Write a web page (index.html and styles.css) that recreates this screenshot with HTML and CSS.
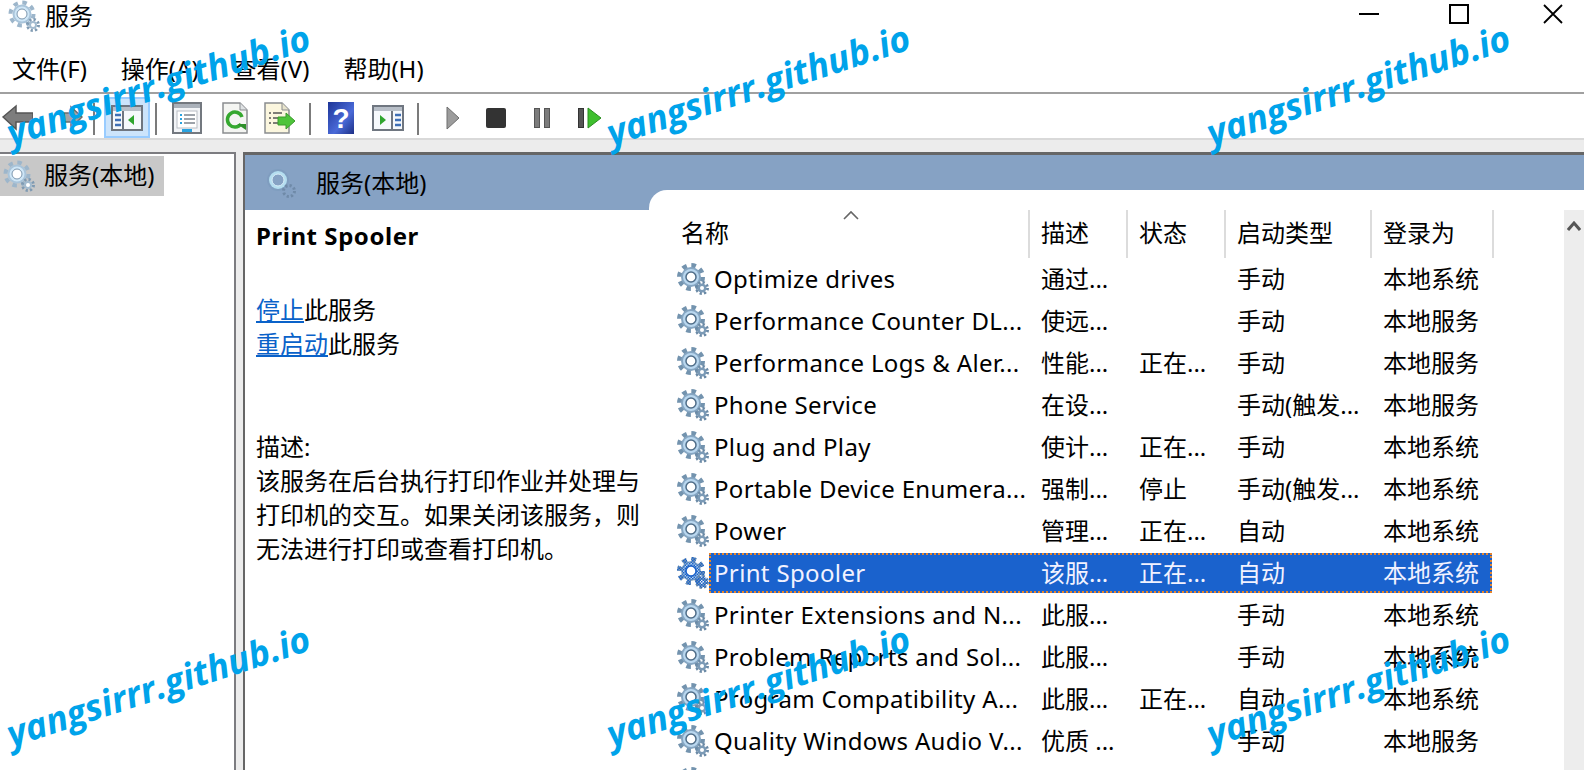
FILE: index.html
```html
<!DOCTYPE html>
<html>
<head>
  <title>服务</title>
  <link rel="stylesheet" href="styles.css">
</head>
<body>
  <svg class="sprite" width="0" height="0">
    <defs>
      <pattern id="dither" width="3" height="3" patternUnits="userSpaceOnUse">
        <rect width="1.5" height="1.5" fill="#1a62cd"/>
        <rect x="1.5" y="1.5" width="1.5" height="1.5" fill="#1a62cd"/>
      </pattern>
      <symbol id="gear" viewBox="0 0 32 32">
        <circle cx="14" cy="14" r="11.5" fill="none" stroke="#7393ae" stroke-width="5" stroke-dasharray="4.5 4.53"/>
        <circle cx="14" cy="14" r="10" fill="#86a6c2"/>
        <circle cx="14" cy="14" r="8" fill="#b9d7ef"/>
        <circle cx="14" cy="14" r="5" fill="#fff" stroke="#4f6d88" stroke-width="1.5"/>
        <circle cx="25" cy="25" r="5.5" fill="none" stroke="#6b8aa6" stroke-width="3" stroke-dasharray="2.2 2.1"/>
        <circle cx="25" cy="25" r="4.5" fill="#7b9ab6"/>
        <circle cx="25" cy="25" r="2" fill="#fff"/>
      </symbol>
      <symbol id="gear-light" viewBox="0 0 32 32">
        <circle cx="14" cy="14" r="11.5" fill="none" stroke="#9db6cb" stroke-width="4" stroke-dasharray="4.5 4.53"/>
        <circle cx="14" cy="14" r="9.5" fill="#a9c4da"/>
        <circle cx="14" cy="14" r="7.5" fill="#cfe6f6"/>
        <circle cx="14" cy="14" r="5" fill="#fff" stroke="#7d97ae" stroke-width="1"/>
        <circle cx="25" cy="25" r="5.5" fill="none" stroke="#7f9ab2" stroke-width="3" stroke-dasharray="2.2 2.1"/>
        <circle cx="25" cy="25" r="4" fill="#a3bbcf"/>
        <circle cx="25" cy="25" r="2" fill="#fff"/>
      </symbol>
      <symbol id="gear-head" viewBox="0 0 32 32">
        <circle cx="14" cy="14" r="11" fill="#7f9dbf"/>
        <circle cx="14" cy="14" r="9" fill="#b5def0"/>
        <circle cx="14" cy="14" r="6" fill="#86a2c4" stroke="#d9eef8" stroke-width="1"/>
        <circle cx="25" cy="25" r="5.5" fill="none" stroke="#6f8aa8" stroke-width="3" stroke-dasharray="2.2 2.1"/>
        <circle cx="25" cy="25" r="2" fill="#86a2c4"/>
      </symbol>
      <symbol id="gear-sel" viewBox="0 0 32 32">
        <use href="#gear" width="32" height="32"/>
        <circle cx="14" cy="14" r="11.5" fill="none" stroke="url(#dither)" stroke-width="5" stroke-dasharray="4.5 4.53"/>
        <circle cx="14" cy="14" r="9" fill="url(#dither)"/>
        <circle cx="14" cy="14" r="5" fill="#fff" stroke="#1a62cd" stroke-width="1.5"/>
        <circle cx="25" cy="25" r="6" fill="url(#dither)"/>
      </symbol>
    </defs>
  </svg>

  <div class="titlebar">
    <svg class="title-gear" width="32" height="32"><use href="#gear-light"/></svg>
    <span class="title-text">服务</span>
    <div class="win-controls">
      <svg width="20" height="20"><path d="M0 10h20" stroke="#000" stroke-width="2"/></svg>
      <svg class="win-max" width="20" height="20"><rect x="1" y="1" width="18" height="18" fill="none" stroke="#000" stroke-width="2"/></svg>
      <svg width="20" height="20"><path d="M1 1l18 18M19 1L1 19" stroke="#000" stroke-width="1.8"/></svg>
    </div>
  </div>

  <div class="menubar">
    <span class="menu-item m-file">文件(F)</span>
    <span class="menu-item">操作(A)</span>
    <span class="menu-item">查看(V)</span>
    <span class="menu-item">帮助(H)</span>
  </div>

  <div class="toolbar">
    <svg class="ml-2" width="31" height="27"><path d="M1 13L14 2v7h17v9H14v7z" fill="#7d7d7d" stroke="#555" stroke-width="1.5"/></svg>
    <svg class="ml-30" width="20" height="27"><path d="M19 13L8 3v6H1v9h7v6z" fill="#a3a3a3" stroke="#6d6d6d" stroke-width="1.5"/></svg>
    <span class="sep ml-10"></span>
    <span class="tool-active ml-9">
      <svg width="32" height="26">
        <rect x="1" y="1" width="30" height="24" fill="#f6f9fc" stroke="#6f7680" stroke-width="2"/>
        <rect x="2" y="2" width="28" height="4" fill="#b8bfc8"/>
        <path d="M12 6v18" stroke="#6f7680" stroke-width="2"/>
        <path d="M4 10h6M4 15h6M4 20h6" stroke="#3f6fb5" stroke-width="2.5"/>
        <path d="M23 10v10l-6-5z" fill="#2fa52f"/>
      </svg>
    </span>
    <span class="sep ml-5"></span>
    <svg class="ml-15" width="30" height="32">
      <rect x="1" y="1" width="28" height="30" fill="#f2f4f7" stroke="#73787f" stroke-width="2"/>
      <rect x="2" y="2" width="26" height="4" fill="#aab1ba"/>
      <rect x="5" y="9" width="20" height="17" fill="#fff" stroke="#b9bec5"/>
      <path d="M8 13h2M8 17h2M8 21h2" stroke="#2aa3e0" stroke-width="2"/>
      <path d="M12 13h11M12 17h11M12 21h11" stroke="#7d858f" stroke-width="1.5"/>
      <rect x="10" y="27" width="10" height="3" fill="#2aa3e0"/>
    </svg>
    <svg class="ml-20" width="26" height="32">
      <path d="M1 1h17l7 7v23H1z" fill="#f4f5f2" stroke="#8a8d90" stroke-width="1.5"/>
      <path d="M18 1v7h7" fill="#dfe2e4" stroke="#8a8d90"/>
      <path d="M19 22a7.5 7.5 0 1 1 1-7" fill="none" stroke="#35a82f" stroke-width="3.5"/>
      <path d="M15 22h9v6z" fill="#2e8f2a"/>
    </svg>
    <svg class="ml-16" width="32" height="32">
      <path d="M1 1h17l7 7v23H1z" fill="#fbf6de" stroke="#8a8d90" stroke-width="1.5"/>
      <path d="M18 1v7h7" fill="#e8e4cc" stroke="#8a8d90"/>
      <path d="M5 11h2M5 16h2M5 21h2M9 11h9M9 16h7M9 21h7" stroke="#555" stroke-width="1.5"/>
      <path d="M14 15h8v-4l9 8-9 8v-4h-8z" fill="#4ec43a" stroke="#3a9a2c"/>
    </svg>
    <span class="sep ml-13"></span>
    <svg class="ml-17" width="26" height="32">
      <defs>
        <linearGradient id="helpbg" x1="0" y1="0" x2="1" y2="1"><stop offset="0" stop-color="#1d3597"/><stop offset="0.6" stop-color="#4a6ad8"/><stop offset="1" stop-color="#1d2f85"/></linearGradient>
      </defs>
      <rect width="26" height="32" fill="url(#helpbg)"/>
      <text class="help-mark" x="13" y="26">?</text>
    </svg>
    <svg class="ml-18" width="32" height="26">
      <rect x="1" y="1" width="30" height="24" fill="#f6f9fc" stroke="#6f7680" stroke-width="2"/>
      <rect x="2" y="2" width="28" height="4" fill="#b8bfc8"/>
      <path d="M20 6v18" stroke="#6f7680" stroke-width="2"/>
      <path d="M23 10h6M23 15h6M23 20h6" stroke="#3f6fb5" stroke-width="2.5"/>
      <path d="M8 10v10l6-5z" fill="#2fa52f"/>
    </svg>
    <span class="sep ml-13"></span>
    <svg class="ml-27" width="14" height="24"><path d="M1 1l12 11L1 23z" fill="#9c9c9c" stroke="#6e6e6e"/></svg>
    <svg class="ml-26" width="20" height="20"><rect width="20" height="20" rx="2" fill="#333"/></svg>
    <svg class="ml-28" width="16" height="20"><rect x="0.5" y="0.5" width="5" height="19" fill="#7c7c7c" stroke="#555"/><rect x="10.5" y="0.5" width="5" height="19" fill="#7c7c7c" stroke="#555"/></svg>
    <svg class="ml-28" width="24" height="22"><rect x="0.5" y="1.5" width="5" height="19" fill="#555" stroke="#333"/><path d="M10 1l13 10-13 10z" fill="#3fbf2e" stroke="#2a8d20"/></svg>
  </div>

  <div class="band"></div>

  <div class="main">
    <div class="tree">
      <div class="tree-item">
        <svg width="32" height="32"><use href="#gear-light"/></svg>
        <span>服务(本地)</span>
      </div>
    </div>
    <div class="divider"></div>
    <div class="pane">
      <div class="pane-head">
        <svg width="32" height="32"><use href="#gear-head"/></svg>
        <span>服务(本地)</span>
      </div>
      <div class="pane-body">
        <div class="detail">
          <h2 class="detail-title">Print Spooler</h2>
          <p class="detail-links"><a href="#">停止</a>此服务<br><a href="#">重启动</a>此服务</p>
          <p class="detail-desc">描述:<br>该服务在后台执行打印作业并处理与<br>打印机的交互。如果关闭该服务，则<br>无法进行打印或查看打印机。</p>
        </div>
        <div class="list">
          <div class="list-scroll"><svg width="14" height="12"><path d="M1 10l6-7 6 7" fill="none" stroke="#555" stroke-width="3"/></svg></div>
          <div class="list-head">
            <div class="col-name">名称<svg class="sort-caret" width="16" height="10"><path d="M1 9l7-7 7 7" fill="none" stroke="#666" stroke-width="1.6"/></svg></div>
            <div>描述</div>
            <div>状态</div>
            <div>启动类型</div>
            <div>登录为</div>
          </div>

          <div class="row"><svg width="32" height="32"><use href="#gear"/></svg><div class="cells"><span>Optimize drives</span><span>通过...</span><span></span><span>手动</span><span>本地系统</span></div></div>
          <div class="row"><svg width="32" height="32"><use href="#gear"/></svg><div class="cells"><span>Performance Counter DL...</span><span>使远...</span><span></span><span>手动</span><span>本地服务</span></div></div>
          <div class="row"><svg width="32" height="32"><use href="#gear"/></svg><div class="cells"><span>Performance Logs &amp; Aler...</span><span>性能...</span><span>正在...</span><span>手动</span><span>本地服务</span></div></div>
          <div class="row"><svg width="32" height="32"><use href="#gear"/></svg><div class="cells"><span>Phone Service</span><span>在设...</span><span></span><span>手动(触发...</span><span>本地服务</span></div></div>
          <div class="row"><svg width="32" height="32"><use href="#gear"/></svg><div class="cells"><span>Plug and Play</span><span>使计...</span><span>正在...</span><span>手动</span><span>本地系统</span></div></div>
          <div class="row"><svg width="32" height="32"><use href="#gear"/></svg><div class="cells"><span>Portable Device Enumera...</span><span>强制...</span><span>停止</span><span>手动(触发...</span><span>本地系统</span></div></div>
          <div class="row"><svg width="32" height="32"><use href="#gear"/></svg><div class="cells"><span>Power</span><span>管理...</span><span>正在...</span><span>自动</span><span>本地系统</span></div></div>
          <div class="row row-selected"><svg width="32" height="32"><use href="#gear-sel"/></svg><div class="cells"><span>Print Spooler</span><span>该服...</span><span>正在...</span><span>自动</span><span>本地系统</span></div></div>
          <div class="row"><svg width="32" height="32"><use href="#gear"/></svg><div class="cells"><span>Printer Extensions and N...</span><span>此服...</span><span></span><span>手动</span><span>本地系统</span></div></div>
          <div class="row"><svg width="32" height="32"><use href="#gear"/></svg><div class="cells"><span>Problem Reports and Sol...</span><span>此服...</span><span></span><span>手动</span><span>本地系统</span></div></div>
          <div class="row"><svg width="32" height="32"><use href="#gear"/></svg><div class="cells"><span>Program Compatibility A...</span><span>此服...</span><span>正在...</span><span>自动</span><span>本地系统</span></div></div>
          <div class="row"><svg width="32" height="32"><use href="#gear"/></svg><div class="cells"><span>Quality Windows Audio V...</span><span>优质 ...</span><span></span><span>手动</span><span>本地服务</span></div></div>
          <div class="row-peek"><svg width="32" height="32"><use href="#gear"/></svg></div>
        </div>
      </div>
    </div>
  </div>

  <div class="watermarks">
    <span>yangsirrr.github.io</span>
    <span>yangsirrr.github.io</span>
    <span>yangsirrr.github.io</span>
    <span>yangsirrr.github.io</span>
    <span>yangsirrr.github.io</span>
    <span>yangsirrr.github.io</span>
  </div>
</body>
</html>
```

FILE: styles.css
```css
html, body { margin: 0; height: 770px; overflow: hidden; background: #fff; }
body { position: relative; font-family: "Noto Sans", "Noto Sans CJK SC", sans-serif; font-size: 24px; color: #000; }
svg { display: block; flex: none; }
.sprite { position: absolute; }

.titlebar { display: flex; height: 46px; padding-left: 8px; align-items: flex-start; }
.title-text { margin-left: 5px; line-height: 32px; }
.win-controls { display: flex; gap: 72px; margin-left: auto; margin-right: 21px; padding-top: 4px; }
.win-max { margin-left: -2px; margin-right: 2px; }

.menubar { display: flex; height: 46px; align-items: center; box-sizing: border-box; }
.menu-item { margin-left: 34px; line-height: 46px; }
.m-file { margin-left: 12px; }

.toolbar { display: flex; height: 46px; box-sizing: border-box; align-items: center; padding-top: 3px; border-top: 2px solid #a0a0a0; }
.sep { width: 2px; height: 32px; background: #7b7b7b; flex: none; margin-top: 3px; }
.tool-active { display: flex; align-items: center; justify-content: center; box-sizing: border-box; width: 46px; height: 41px; background: #cce4fb; border: 2px solid #99ccff; align-self: flex-end; flex: none; }
.help-mark { font-family: "Liberation Sans", sans-serif; font-size: 28px; font-weight: bold; fill: #fff; text-anchor: middle; }
.ml-2 { margin-left: 2px; }
.ml-5 { margin-left: 5px; }
.ml-9 { margin-left: 9px; }
.ml-10 { margin-left: 10px; }
.ml-13 { margin-left: 13px; }
.ml-15 { margin-left: 15px; }
.ml-16 { margin-left: 16px; }
.ml-17 { margin-left: 17px; }
.ml-18 { margin-left: 18px; }
.ml-20 { margin-left: 20px; }
.ml-26 { margin-left: 26px; }
.ml-27 { margin-left: 27px; }
.ml-28 { margin-left: 28px; }
.ml-30 { margin-left: 30px; }

.band { height: 14px; box-sizing: border-box; background: #ececec; border-top: 2px solid #d9d9d9; }

.main { display: flex; height: 618px; }
.tree { width: 234px; box-sizing: border-box; border-top: 2px solid #7c7c80; padding-top: 2px; }
.tree-item { display: flex; align-items: center; width: 164px; height: 40px; padding-left: 3px; box-sizing: border-box; background: #c8c8c8; }
.tree-item span { margin-left: 9px; padding-bottom: 5px; }
.divider { width: 7px; background: #ececec; border-left: 2px solid #7c7c80; }

.pane { flex: 1; display: flex; flex-direction: column; background: #86a2c4; border-left: 2px solid #666; border-top: 3px solid #666; min-width: 0; }
.pane-head { display: flex; height: 35px; padding: 11px 0 0 19px; box-sizing: border-box; align-items: flex-start; }
.pane-head span { margin-left: 20px; line-height: 30px; margin-top: 2px; }
.pane-body { flex: 1; display: flex; min-height: 0; }

.detail { width: 404px; margin-top: 20px; background: #fff; padding: 9px 0 0 11px; box-sizing: border-box; }
.detail-title { margin: 0; font-size: 24px; font-weight: bold; line-height: 34px; letter-spacing: 0.55px; }
.detail-links { margin: 40px 0 0; line-height: 34px; }
.detail-desc { margin: 69px 0 0; line-height: 34px; white-space: nowrap; }
.detail a { color: #0a62c9; }

.list { position: relative; flex: 1; background: #fff; border-top-left-radius: 18px; padding: 20px 0 0 28px; box-sizing: border-box; overflow: hidden; }
.list-scroll { position: absolute; top: 20px; right: 0; bottom: 0; width: 20px; background: #ededed; display: flex; justify-content: center; padding-top: 10px; box-sizing: border-box; }

.list-head { display: grid; grid-template-columns: 353px 98px 98px 146px 122px; height: 48px; width: 817px; }
.list-head div { position: relative; border-right: 2px solid #dcdcdc; padding-left: 11px; line-height: 46px; white-space: nowrap; }
.list-head .col-name { padding-left: 4px; }
.sort-caret { position: absolute; left: 166px; top: 0; }

.row { display: flex; height: 42px; align-items: center; }
.row-peek { height: 8px; overflow: hidden; padding-top: 5px; box-sizing: border-box; }
.cells { display: grid; grid-template-columns: 319px 98px 98px 146px 122px; height: 40px; width: 783px; box-sizing: border-box; align-items: center; white-space: nowrap; line-height: 36px; }
.cells span { padding-left: 13px; }
.cells span:first-child { padding-left: 5px; letter-spacing: 0.35px; }
.row-selected .cells { background: #1a62cd; color: #f2f2ff; outline: 2px dotted #e8842a; outline-offset: -2px; }

.watermarks { position: absolute; left: 0; top: 0; right: 0; bottom: 0; display: grid; grid-template-columns: repeat(3, 316px); column-gap: 284px; grid-template-rows: 50px 50px; row-gap: 551px; padding-top: 59px; box-sizing: border-box; pointer-events: none; }
.watermarks span { display: flex; align-items: center; justify-content: center; font-family: "Open Sans", sans-serif; font-weight: bold; font-style: italic; font-size: 36px; color: #00a3ea; transform: rotate(-18deg); white-space: nowrap; }
```
